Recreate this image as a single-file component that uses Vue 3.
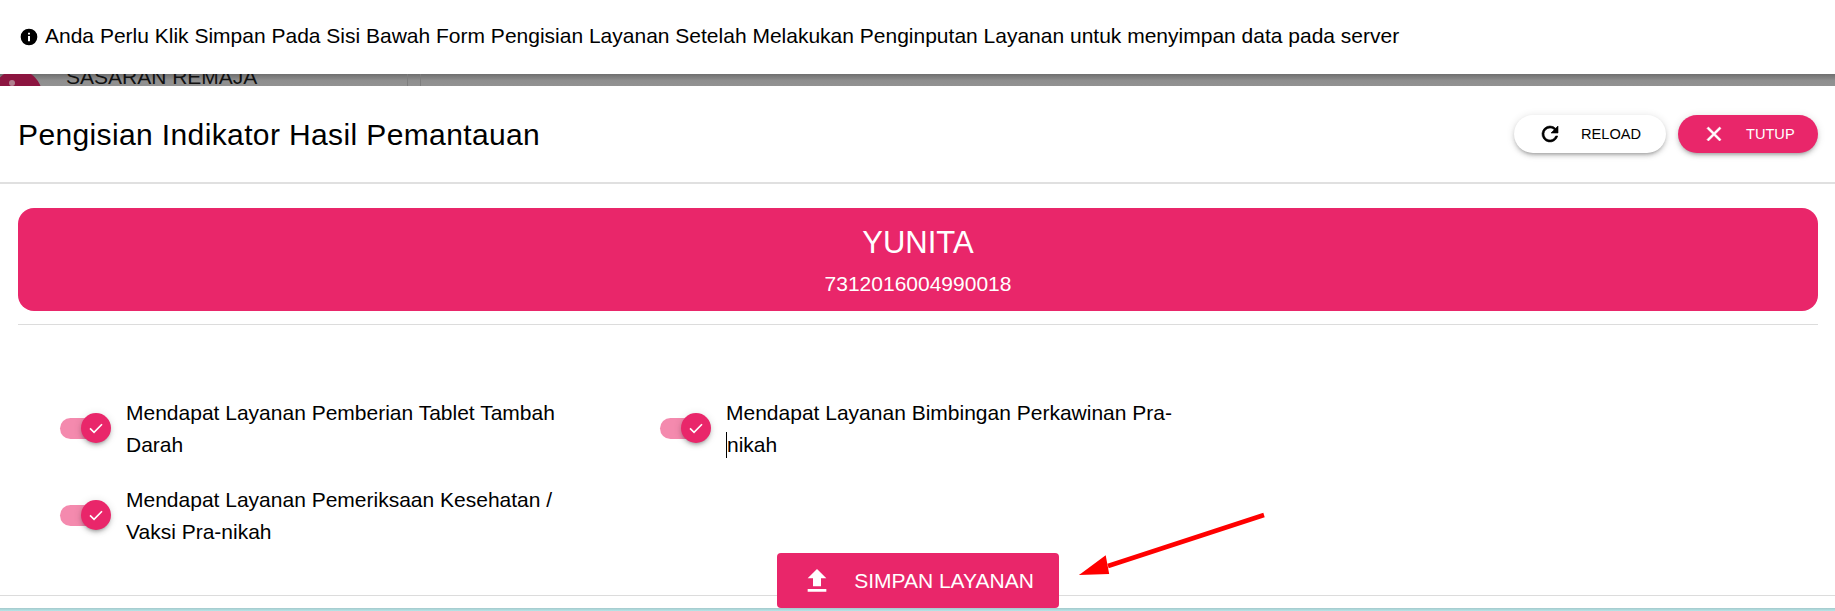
<script setup>
const services = [
  { text: 'Mendapat Layanan Pemberian Tablet Tambah Darah' },
  { text: 'Mendapat Layanan Bimbingan Perkawinan Pra-', tail: 'nikah' },
  { text: 'Mendapat Layanan Pemeriksaan Kesehatan / Vaksi Pra-nikah' },
]
</script>

<template>
  <div class="page">
    <div class="notice">
      <svg class="info" viewBox="0 0 24 24"><path d="M12 2a10 10 0 1 0 0 20 10 10 0 0 0 0-20zm1.2 15h-2.4v-6.2h2.4V17zm0-8h-2.4V6.8h2.4V9z" /></svg>
      <span>Anda Perlu Klik Simpan Pada Sisi Bawah Form Pengisian Layanan Setelah Melakukan Penginputan Layanan untuk menyimpan data pada server</span>
    </div>

    <div class="backdrop">
      <div class="back-dot"><i></i></div>
      <div class="back-text">SASARAN REMAJA</div>
      <div class="back-rule"></div>
    </div>

    <div class="dialog">
      <header class="head">
        <h1>Pengisian Indikator Hasil Pemantauan</h1>
        <div class="actions">
          <button class="pill white">
            <svg viewBox="0 0 24 24"><path d="M17.65 6.35A7.96 7.96 0 0 0 12 4a8 8 0 1 0 7.73 10h-2.08A6 6 0 1 1 12 6c1.66 0 3.14.69 4.22 1.78L13 11h7V4l-2.35 2.35z" /></svg>
            RELOAD
          </button>
          <button class="pill pink">
            <svg viewBox="0 0 24 24"><path d="M19 6.41 17.59 5 12 10.59 6.41 5 5 6.41 10.59 12 5 17.59 6.41 19 12 13.41 17.59 19 19 17.59 13.41 12z" /></svg>
            TUTUP
          </button>
        </div>
      </header>

      <div class="body">
        <div class="banner">
          <div class="name">YUNITA</div>
          <div class="nik">7312016004990018</div>
        </div>
        <div class="rule"></div>

        <div class="services">
          <label v-for="s in services" :key="s.text" class="service">
            <span class="toggle">
              <span class="thumb">
                <svg viewBox="0 0 24 24"><path d="M4 12.5l5.4 5.4L20 7" /></svg>
              </span>
            </span>
            <span class="label">{{ s.text }}<span v-if="s.tail" class="tail"><span class="caret"></span>{{ s.tail }}</span></span>
          </label>
        </div>
      </div>

      <footer class="foot">
        <button class="save">
          <svg viewBox="0 0 24 24"><path d="M9 16h6v-6h4l-7-7-7 7h4v6zm-4 2h14v2H5v-2z" /></svg>
          SIMPAN LAYANAN
        </button>
      </footer>
    </div>
    <div class="edge"></div>

    <svg class="arrow" viewBox="0 0 1835 611">
      <path d="M1264 515 L1108 566" stroke="#ff0000" stroke-width="4.5" fill="none" />
      <path d="M1082 574 L1105 557 L1108 573 Z" fill="#ff0000" stroke="#ff0000" stroke-width="2" />
    </svg>
  </div>
</template>

<style scoped>
.page {
  position: relative;
  width: 1835px;
  height: 611px;
  overflow: hidden;
  background: #fff;
  font-family: "Liberation Sans", Arial, sans-serif;
  color: #000;
}
.notice {
  height: 74px;
  display: flex;
  align-items: center;
  gap: 6px;
  padding: 0 0 3px 19px;
  font-size: 21px;
  box-sizing: border-box;
}
.info {
  width: 20px;
  height: 20px;
  flex: none;
  margin-top: 2px;
}
.backdrop {
  position: relative;
  height: 12px;
  overflow: hidden;
  background: linear-gradient(#6f6f6f, #8f8f8f 55%, #929292);
}
.back-dot {
  position: absolute;
  left: -7px;
  top: -4px;
  width: 49px;
  height: 49px;
  border-radius: 50%;
  background: #8c1540;
}
.back-dot i {
  position: absolute;
  left: 16px;
  top: 10px;
  width: 6px;
  height: 6px;
  border-radius: 50%;
  background: #b0808f;
}
.back-text {
  position: absolute;
  left: 66px;
  top: -9px;
  font-size: 21px;
  line-height: 24px;
  color: #111;
}
.back-rule {
  position: absolute;
  left: 407px;
  top: 0;
  width: 14px;
  height: 12px;
  border-left: 1px solid #7e7e7e;
  border-right: 1px solid #7e7e7e;
  box-sizing: border-box;
}
.dialog {
  height: 525px;
  display: flex;
  flex-direction: column;
}
.head {
  height: 98px;
  display: flex;
  align-items: center;
  justify-content: space-between;
  padding: 0 17px 0 18px;
  border-bottom: 2px solid #e0e0e0;
  box-sizing: border-box;
  flex: none;
}
h1 {
  margin: 2px 0 0;
  font-size: 30px;
  font-weight: 400;
  letter-spacing: .0125em;
}
.actions {
  display: flex;
  gap: 12px;
  margin-top: -1px;
}
.pill {
  height: 38px;
  border: 0;
  border-radius: 19px;
  display: flex;
  align-items: center;
  font-family: inherit;
  font-size: 14.6px;
  box-shadow: 0 3px 3px -2px rgba(0, 0, 0, .2), 0 3px 4px rgba(0, 0, 0, .14), 0 1px 8px rgba(0, 0, 0, .12);
}
.pill svg {
  width: 24px;
  height: 24px;
  margin-right: 19px;
  stroke: currentColor;
  stroke-width: .6;
}
.white {
  width: 152px;
  padding-left: 24px;
  background: #fff;
  color: #000;
}
.pink {
  width: 140px;
  padding-left: 24px;
  background: #e9266a;
  color: #fff;
}
.pink svg {
  fill: #fff;
  margin-right: 20px;
}
.body {
  flex: 1;
  padding: 24px 17px 0 18px;
}
.banner {
  height: 103px;
  border-radius: 16px;
  background: #e9266a;
  color: #fff;
  display: flex;
  flex-direction: column;
  align-items: center;
  padding-top: 17px;
  box-sizing: border-box;
}
.name {
  font-size: 31px;
  line-height: 36px;
}
.nik {
  font-size: 21px;
  line-height: 24px;
  margin-top: 11px;
}
.rule {
  height: 1px;
  background: #dcdcdc;
  margin-top: 13px;
}
.services {
  display: grid;
  grid-template-columns: 600px 600px;
  row-gap: 24px;
  padding: 72px 0 0 42px;
}
.service {
  display: flex;
  align-items: center;
  gap: 26px;
}
.toggle {
  position: relative;
  width: 40px;
  height: 21px;
  flex: none;
  border-radius: 11px;
  background: #f48aae;
}
.thumb {
  position: absolute;
  right: -11px;
  top: -5px;
  width: 30px;
  height: 30px;
  border-radius: 50%;
  background: #e9266a;
  display: flex;
  align-items: center;
  justify-content: center;
  box-shadow: 0 3px 3px -2px rgba(0, 0, 0, .2), 0 3px 4px rgba(0, 0, 0, .14), 0 1px 8px rgba(0, 0, 0, .12);
}
.thumb svg {
  width: 18px;
  height: 18px;
  fill: none;
  stroke: #fff;
  stroke-width: 2.2;
}
.label {
  width: 460px;
  font-size: 21px;
  line-height: 31.5px;
}
.tail {
  white-space: nowrap;
}
.caret {
  display: inline-block;
  width: 0;
  height: 26px;
  border-left: 1px solid #000;
  vertical-align: -6px;
}
.foot {
  position: relative;
  flex: none;
  height: 58px;
  display: flex;
  justify-content: center;
}
.foot::before {
  content: "";
  position: absolute;
  left: 0;
  right: 0;
  top: 42px;
  height: 1px;
  background: #dcdcdc;
}
.save {
  position: relative;
  width: 282px;
  height: 55px;
  border: 0;
  border-radius: 4px;
  background: #e9266a;
  color: #fff;
  display: flex;
  align-items: center;
  justify-content: center;
  gap: 21px;
  font-family: inherit;
  font-size: 21px;
}
.save svg {
  width: 32px;
  height: 32px;
  fill: #fff;
}
.edge {
  position: absolute;
  left: 0;
  right: 0;
  bottom: 0;
  height: 3px;
  background: linear-gradient(#a5c9cc, #b5e6e8);
}
.arrow {
  position: absolute;
  inset: 0;
  width: 1835px;
  height: 611px;
  pointer-events: none;
}
</style>
